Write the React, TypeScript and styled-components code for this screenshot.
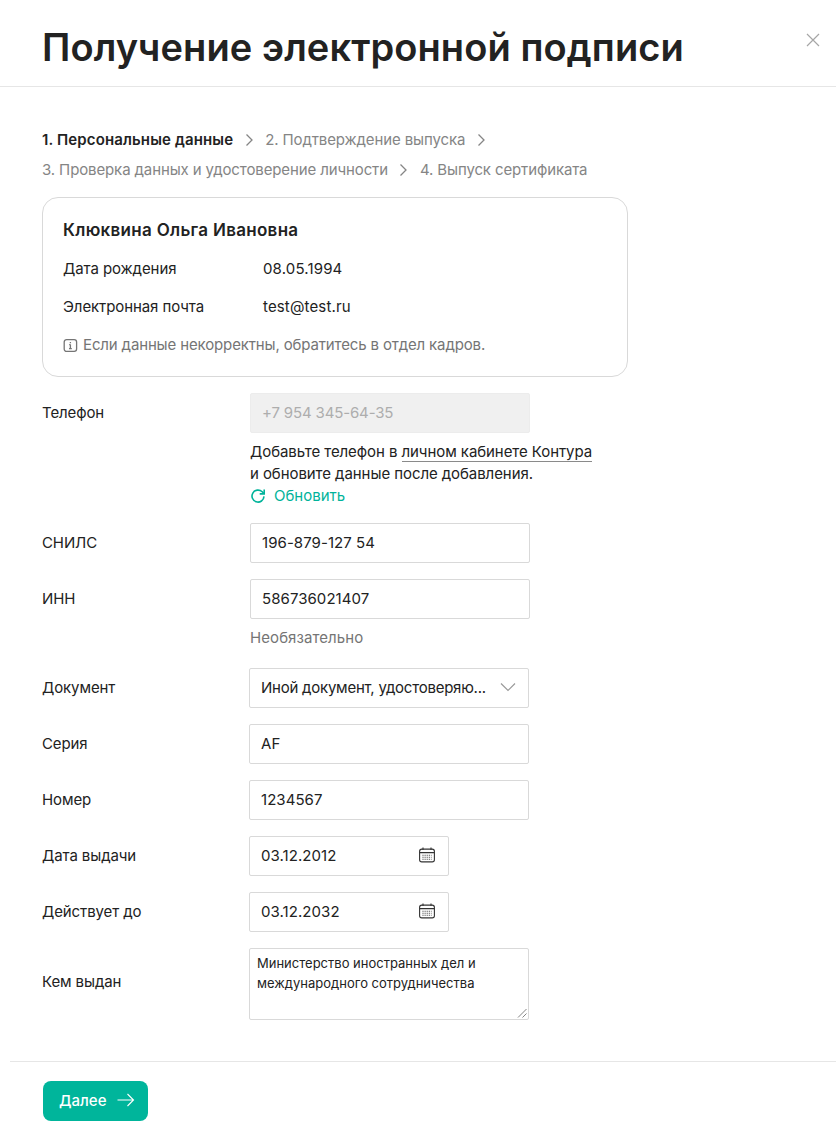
import React from "react";
import styled, { createGlobalStyle } from "styled-components";

const Global = createGlobalStyle`
  html, body { margin: 0; padding: 0; background: #fff; }
  body { font-family: Inter, "Noto Sans", sans-serif; color: #222; font-size: 15px; overflow: hidden; }
  * { box-sizing: border-box; }
`;

const Page = styled.div`
  width: 836px;
  height: 1146px;
  display: flex;
  flex-direction: column;
`;
const Header = styled.header`
  height: 87px;
  border-bottom: 1px solid #e6e6e6;
  padding: 0 16px 0 42px;
  display: flex;
  justify-content: space-between;
`;
const Title = styled.h1`
  margin: 24px 0 0;
  font-family: Inter, sans-serif;
  font-size: 38px;
  line-height: 46px;
  font-weight: 600;
  color: #222;
  letter-spacing: 0.1px;
`;
const Close = styled.button`
  border: 0;
  background: none;
  padding: 0;
  margin-top: 33px;
  width: 14px;
  height: 14px;
  display: flex;
  color: #a6a6a6;
`;
const Body = styled.main`
  flex: 1;
  padding: 38px 0 0 42px;
  display: flex;
  flex-direction: column;
`;
const Steps = styled.nav`
  width: 586px;
  display: flex;
  flex-wrap: wrap;
  align-items: center;
  font-size: 15px;
  line-height: 30px;
  margin-bottom: 12px;
`;
const Step = styled.span<{ $active?: boolean }>`
  color: ${(p) => (p.$active ? "#222" : "#858585")};
  font-weight: ${(p) => (p.$active ? 600 : 400)};
  letter-spacing: ${(p) => (p.$active ? "0.13px" : "-0.12px")};
`;
const StepChevron = styled.span`
  width: 32px;
  display: flex;
  justify-content: center;
  color: #858585;
`;
const Break = styled.span`
  flex-basis: 100%;
  height: 0;
`;
const Card = styled.section`
  width: 586px;
  height: 180px;
  border: 1px solid #d9d9d9;
  border-radius: 16px;
  padding: 20px 20px 0;
  margin-bottom: 16px;
`;
const Name = styled.div`
  font-size: 17px;
  line-height: 24px;
  font-weight: 600;
  letter-spacing: 0.3px;
  margin-bottom: 16px;
`;
const InfoRow = styled.div`
  display: flex;
  height: 38px;
  line-height: 22px;
  font-size: 15px;
`;
const InfoLabel = styled.span`
  width: 200px;
  letter-spacing: -0.09px;
`;
const InfoValue = styled.span`
  letter-spacing: 0.15px;
`;
const Note = styled.div`
  display: flex;
  align-items: center;
  gap: 5px;
  color: #757575;
  line-height: 22px;
  font-size: 15px;
  letter-spacing: -0.14px;
`;
const Row = styled.div<{ $gap?: number }>`
  display: flex;
  align-items: flex-start;
  margin-bottom: ${(p) => p.$gap ?? 16}px;
`;
const Label = styled.label<{ $col?: number; $h?: number }>`
  width: ${(p) => p.$col ?? 207}px;
  flex: none;
  height: ${(p) => p.$h ?? 38}px;
  display: flex;
  align-items: center;
  font-size: 15px;
  letter-spacing: -0.1px;
`;
const FieldCol = styled.div`
  display: flex;
  flex-direction: column;
`;
const Box = styled.div<{ $w?: number; $disabled?: boolean; $tight?: boolean }>`
  width: ${(p) => p.$w ?? 280}px;
  height: 40px;
  border: 1px solid ${(p) => (p.$disabled ? "#ececec" : "#d9d9d9")};
  border-radius: 2px;
  background: ${(p) => (p.$disabled ? "#f0f0f0" : "#fff")};
  color: ${(p) => (p.$disabled ? "#adadad" : "#222")};
  padding: 0 12px 2px 11px;
  display: flex;
  align-items: center;
  justify-content: space-between;
  font-size: 15px;
  letter-spacing: ${(p) => (p.$tight ? "-0.24px" : p.$disabled ? "-0.15px" : "0.06px")};
`;
const Hint = styled.div`
  margin-top: 8px;
  line-height: 22px;
  font-size: 15px;
  color: #222;
  letter-spacing: -0.07px;
`;
const Link = styled.a`
  color: #222;
  border-bottom: 1px solid #8a8a8a;
`;
const Refresh = styled.div`
  display: flex;
  align-items: center;
  gap: 8px;
  color: #00b39a;
  line-height: 22px;
  font-size: 15px;
`;
const Optional = styled.div`
  margin-top: 8px;
  line-height: 22px;
  font-size: 15px;
  color: #757575;
  letter-spacing: 0.08px;
`;
const TextArea = styled.div`
  position: relative;
  width: 280px;
  height: 72px;
  border: 1px solid #d9d9d9;
  border-radius: 2px;
  padding: 4px 7px;
  font-size: 13px;
  line-height: 20px;
`;
const Grip = styled.svg`
  position: absolute;
  right: 1px;
  bottom: 1px;
`;
const Footer = styled.footer`
  height: 85px;
  margin-left: 10px;
  border-top: 1px solid #e6e6e6;
  padding: 19px 0 0 33px;
`;
const NextButton = styled.button`
  width: 105px;
  height: 40px;
  border: 0;
  border-radius: 8px;
  background: #00b59b;
  color: #fff;
  font-family: inherit;
  font-size: 15px;
  font-weight: 500;
  display: flex;
  align-items: center;
  gap: 11px;
  padding: 0 0 2px 16px;
`;

const Chevron = () => (
  <svg width="9" height="14" viewBox="0 0 9 14" fill="none" stroke="currentColor" strokeWidth="1.3">
    <path d="M1.5 1.5 7 7l-5.5 5.5" />
  </svg>
);
const Calendar = () => (
  <svg width="18" height="18" viewBox="0 0 18 18" fill="none" stroke="#333" strokeWidth="1.1">
    <rect x="1.6" y="3.1" width="14.8" height="12.8" rx="2.2" />
    <path d="M1.6 6.6h14.8M5 1.4v2.6M13 1.4v2.6" />
    <path d="M4.5 9.2h9M4.5 11.2h9M4.5 13.2h9" strokeDasharray="1 1.1" />
  </svg>
);

export default function App() {
  return (
    <Page>
      <Global />
      <Header>
        <Title>Получение электронной подписи</Title>
        <Close aria-label="Закрыть">
          <svg width="14" height="14" viewBox="0 0 14 14" fill="none" stroke="currentColor" strokeWidth="1.2">
            <path d="M1 1l12 12M13 1 1 13" />
          </svg>
        </Close>
      </Header>
      <Body>
        <Steps>
          <Step $active>1. Персональные данные</Step>
          <StepChevron><Chevron /></StepChevron>
          <Step>2. Подтверждение выпуска</Step>
          <StepChevron><Chevron /></StepChevron>
          <Break />
          <Step>3. Проверка данных и удостоверение личности</Step>
          <StepChevron><Chevron /></StepChevron>
          <Step>4. Выпуск сертификата</Step>
        </Steps>
        <Card>
          <Name>Клюквина Ольга Ивановна</Name>
          <InfoRow><InfoLabel>Дата рождения</InfoLabel><InfoValue>08.05.1994</InfoValue></InfoRow>
          <InfoRow><InfoLabel>Электронная почта</InfoLabel><InfoValue>test@test.ru</InfoValue></InfoRow>
          <Note>
            <svg width="15" height="15" viewBox="0 0 15 15" fill="none" stroke="#757575" strokeWidth="1.3">
              <rect x="1.2" y="1.6" width="12.4" height="11.8" rx="2.4" />
              <path d="M7.4 6.6v4M6 10.7h2.8M6.2 6.6h1.2M7.4 4v1.2" />
            </svg>
            Если данные некорректны, обратитесь в отдел кадров.
          </Note>
        </Card>
        <Row $gap={16}>
          <Label $col={208}>Телефон</Label>
          <FieldCol>
            <Box $disabled>+7 954 345-64-35</Box>
            <Hint>
              Добавьте телефон в <Link>личном кабинете Контура</Link>
              <br />и обновите данные после добавления.
            </Hint>
            <Refresh>
              <svg width="16" height="16" viewBox="0 0 16 16" fill="none" stroke="currentColor" strokeWidth="1.6">
                <path d="M14 8.4a6 6 0 1 1-1.8-4.6l1.8 1.8" />
                <path d="M14.2 1.4v4.5H9.7" />
              </svg>
              Обновить
            </Refresh>
          </FieldCol>
        </Row>
        <Row>
          <Label $col={208}>СНИЛС</Label>
          <Box>196-879-127 54</Box>
        </Row>
        <Row $gap={19}>
          <Label $col={208}>ИНН</Label>
          <FieldCol>
            <Box>586736021407</Box>
            <Optional>Необязательно</Optional>
          </FieldCol>
        </Row>
        <Row>
          <Label>Документ</Label>
          <Box $tight>
            Иной документ, удостоверяю...
            <svg width="16" height="10" viewBox="0 0 16 10" fill="none" stroke="#9a9a9a" strokeWidth="1.2">
              <path d="M1 1.5 8 8.5l7-7" />
            </svg>
          </Box>
        </Row>
        <Row>
          <Label>Серия</Label>
          <Box>AF</Box>
        </Row>
        <Row>
          <Label>Номер</Label>
          <Box>1234567</Box>
        </Row>
        <Row>
          <Label>Дата выдачи</Label>
          <Box $w={200}>03.12.2012<Calendar /></Box>
        </Row>
        <Row>
          <Label>Действует до</Label>
          <Box $w={200}>03.12.2032<Calendar /></Box>
        </Row>
        <Row $gap={0}>
          <Label $h={66}>Кем выдан</Label>
          <TextArea>
            Министерство иностранных дел и международного сотрудничества
            <Grip width="10" height="10" viewBox="0 0 10 10" fill="none" stroke="#777" strokeWidth="0.9">
              <path d="M1 9.5 9.5 1M5.5 9.5l4-4" />
            </Grip>
          </TextArea>
        </Row>
      </Body>
      <Footer>
        <NextButton>
          Далее
          <svg width="18" height="14" viewBox="0 0 18 14" fill="none" stroke="#fff" strokeWidth="1.1">
            <path d="M0.5 7h16M10.5 1l6 6-6 6" />
          </svg>
        </NextButton>
      </Footer>
    </Page>
  );
}
